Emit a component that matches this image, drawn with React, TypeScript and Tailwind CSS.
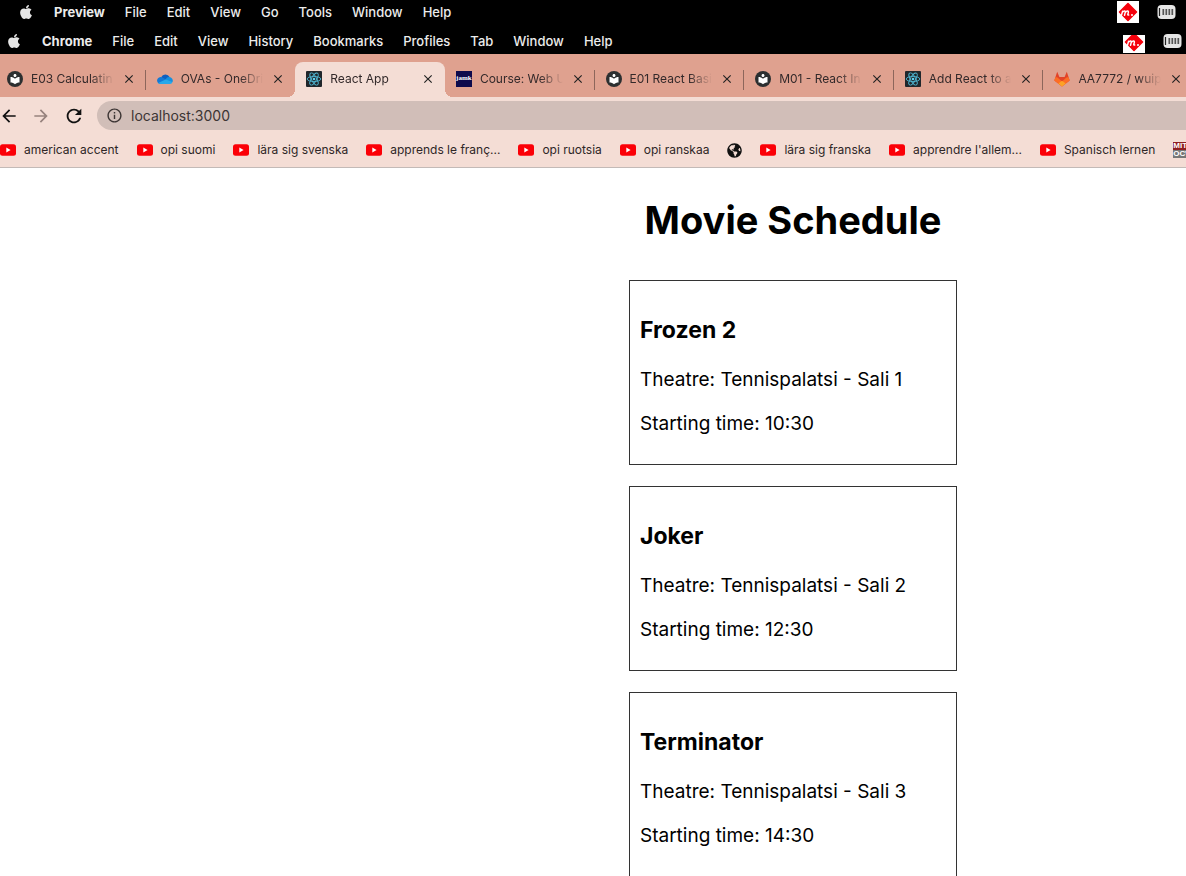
import React from "react";
import { FaApple, FaGlobeAmericas } from "react-icons/fa";
import {
  MdArrowBack,
  MdArrowForward,
  MdClose,
  MdInfoOutline,
  MdLocalLibrary,
  MdRefresh,
} from "react-icons/md";

const previewMenu = ["Preview", "File", "Edit", "View", "Go", "Tools", "Window", "Help"];
const chromeMenu = [
  "Chrome",
  "File",
  "Edit",
  "View",
  "History",
  "Bookmarks",
  "Profiles",
  "Tab",
  "Window",
  "Help",
];

type IconName = "library" | "onedrive" | "react" | "jamk" | "gitlab";

const tabs: { title: string; icon: IconName; active?: boolean }[] = [
  { title: "E03 Calculatin", icon: "library" },
  { title: "OVAs - OneDri", icon: "onedrive" },
  { title: "React App", icon: "react", active: true },
  { title: "Course: Web U", icon: "jamk" },
  { title: "E01 React Basi", icon: "library" },
  { title: "M01 - React In", icon: "library" },
  { title: "Add React to a", icon: "react" },
  { title: "AA7772 / wuip", icon: "gitlab" },
];

const bookmarks: { title: string; icon: "youtube" | "globe" | "mit" }[] = [
  { title: "american accent", icon: "youtube" },
  { title: "opi suomi", icon: "youtube" },
  { title: "lära sig svenska", icon: "youtube" },
  { title: "apprends le franç...", icon: "youtube" },
  { title: "opi ruotsia", icon: "youtube" },
  { title: "opi ranskaa", icon: "youtube" },
  { title: "", icon: "globe" },
  { title: "lära sig franska", icon: "youtube" },
  { title: "apprendre l'allem...", icon: "youtube" },
  { title: "Spanisch lernen", icon: "youtube" },
  { title: "", icon: "mit" },
];

const movies = [
  { title: "Frozen 2", theatre: "Tennispalatsi - Sali 1", time: "10:30" },
  { title: "Joker", theatre: "Tennispalatsi - Sali 2", time: "12:30" },
  { title: "Terminator", theatre: "Tennispalatsi - Sali 3", time: "14:30" },
];

function DiamondIcon({ clipped }: { clipped?: boolean }) {
  return (
    <svg
      viewBox={clipped ? "0 4 22 18" : "0 0 22 22"}
      className={clipped ? "mb-px h-[18px] w-[22px] self-end" : "h-[22px] w-[22px]"}
      aria-hidden="true"
    >
      <rect width="22" height="22" fill="#fff" />
      <path d="M11 2.5 19.5 11 11 19.5 2.5 11Z" fill="#f5000c" stroke="#f5000c" strokeWidth="1.5" strokeLinejoin="round" />
      <path
        d="M4.4 14.4 5.6 10.3M5.4 11.4q1.2-1.5 2.2-1.3 1 .2.6 1.5l-.7 2.6M8.3 11.4q1.3-1.5 2.3-1.3 1.1.2.7 1.5l-.5 1.8q-.2.8.9.7"
        fill="none"
        stroke="#fff"
        strokeWidth="1.5"
        strokeLinecap="round"
      />
      <circle cx="15" cy="13.9" r="1" fill="#fff" />
    </svg>
  );
}

function BatteryIcon() {
  return (
    <svg viewBox="0 0 19 14" className="h-[14px] w-[19px]" aria-hidden="true">
      <rect x="0.5" y="0" width="18" height="14" rx="4" fill="#e6e6e6" />
      <path d="M2.5 3v8" stroke="#222" strokeWidth="1.2" />
      <path d="M6.3 4v6M9.3 4v6M12.3 4v6M15.3 4v6" stroke="#555" strokeWidth="1.7" />
    </svg>
  );
}

function TabIcon({ name }: { name: IconName }) {
  switch (name) {
    case "library":
      return (
        <span className="flex size-4 shrink-0 items-center justify-center rounded-full bg-[#2c2f30] text-white">
          <MdLocalLibrary size={12} />
        </span>
      );
    case "onedrive":
      return (
        <svg viewBox="0 0 16 16" className="size-4 shrink-0" aria-hidden="true">
          <path d="M4.2 6.3A4.6 4.6 0 0 1 12.6 6L9 10.5Z" fill="#0f5fc0" />
          <path d="M3.6 13A3.5 3.5 0 1 1 5 6.3l6 3.4L5 13Z" fill="#1478d4" />
          <path d="M8.6 8.4A3.8 3.8 0 0 1 12.3 6a3.6 3.6 0 0 1 3.2 5L12 11.5Z" fill="#1490df" />
          <path d="m1.2 12 7.4-3.6 6.9 2.7A2.6 2.6 0 0 1 13 13H3.6a3.4 3.4 0 0 1-2.4-1Z" fill="#28a8ea" />
        </svg>
      );
    case "react":
      return (
        <svg viewBox="0 0 16 16" className="size-4 shrink-0" aria-hidden="true">
          <rect width="16" height="16" rx="1" fill="#20262b" />
          <g fill="none" stroke="#4fb4d0" strokeWidth="0.9">
            <ellipse cx="8" cy="8" rx="6.8" ry="2.6" />
            <ellipse cx="8" cy="8" rx="6.8" ry="2.6" transform="rotate(60 8 8)" />
            <ellipse cx="8" cy="8" rx="6.8" ry="2.6" transform="rotate(120 8 8)" />
          </g>
          <circle cx="8" cy="8" r="1.3" fill="#5fd0ee" />
        </svg>
      );
    case "jamk":
      return (
        <span className="flex size-4 shrink-0 items-center justify-center bg-[#0e0a4c] pb-px font-['Liberation_Serif',serif] text-[7px] leading-none font-bold text-white">
          jamk
        </span>
      );
    case "gitlab":
      return (
        <svg viewBox="0 0 16 16" className="size-4 shrink-0" aria-hidden="true">
          <path d="M8 15.5.3 9.6 3.2.8 5.4 6h5.2L12.8.8l2.9 8.8Z" fill="#e24329" />
          <path d="M8 15.5.3 9.6 1.6 6q2 .3 3.4 1.8L8 10.5l3-2.7Q12.4 6.3 14.4 6l1.3 3.6Z" fill="#fc6d26" />
          <path d="m8 15.5-3.7-2.9L8 9.8l3.7 2.8Z" fill="#fca326" />
        </svg>
      );
  }
}

function BookmarkIcon({ name }: { name: "youtube" | "globe" | "mit" }) {
  if (name === "globe") return <FaGlobeAmericas size={15} className="shrink-0 text-[#111]" aria-hidden="true" />;
  if (name === "mit")
    return (
      <span className="flex shrink-0 flex-col font-['Liberation_Sans',sans-serif] text-[8px] leading-none font-bold text-white">
        <span className="bg-[#8f1d22]">MIT</span>
        <span className="bg-[#777]">OCW</span>
      </span>
    );
  return (
    <svg viewBox="0 0 16 12" className="h-3 w-4 shrink-0" aria-hidden="true">
      <rect y="0.3" width="16" height="11.4" rx="2.5" fill="#fb0007" />
      <path d="M6.3 3.6v4.8L10.6 6Z" fill="#fff" />
    </svg>
  );
}

function MenuBar({ items, className, clipped }: { items: string[]; className: string; clipped?: boolean }) {
  return (
    <nav className={`flex items-center justify-between text-[13px] leading-4 font-medium text-[#ececec] ${className}`}>
      <div className="flex items-center gap-5">
        <button aria-label="Apple menu" className="text-[#e6e6e6]">
          <FaApple size={16} />
        </button>
        {items.map((item, i) => (
          <button key={item} className={i === 0 ? "font-bold" : ""}>
            {item}
          </button>
        ))}
      </div>
      <div className="flex items-center gap-[18px] self-stretch">
        <DiamondIcon clipped={clipped} />
        <BatteryIcon />
      </div>
    </nav>
  );
}

function BrowserTab({ title, icon, active, divider }: { title: string; icon: IconName; active?: boolean; divider: boolean }) {
  return (
    <div
      role="tab"
      aria-selected={!!active}
      className={`relative flex min-w-0 flex-1 items-center gap-2 pr-[10px] pb-px pl-[11px] text-[12px] text-[#33292a] ${
        active ? "rounded-t-lg bg-[#f4ddd5]" : ""
      }`}
    >
      {active && (
        <>
          <span className="absolute bottom-0 -left-2 size-2 bg-[radial-gradient(circle_at_0_0,transparent_8px,#f4ddd5_8px)]" />
          <span className="absolute -right-2 bottom-0 size-2 bg-[radial-gradient(circle_at_100%_0,transparent_8px,#f4ddd5_8px)]" />
        </>
      )}
      <TabIcon name={icon} />
      <span className="min-w-0 flex-1 [mask-image:linear-gradient(to_right,#000_72%,transparent)] whitespace-nowrap">
        {title}
      </span>
      <button aria-label={`Close ${title}`} className="shrink-0 text-[#222]">
        <MdClose size={14} />
      </button>
      {divider && <span className="absolute top-2 right-0 h-5 w-px bg-[#8d665b]" />}
    </div>
  );
}

export default function App() {
  return (
    <div className="h-screen overflow-hidden bg-white font-[Inter,'Noto_Sans',sans-serif] text-black">
      <header>
        <div className="bg-black">
          <MenuBar items={previewMenu} className="h-6 pr-[10px] pl-[18px]" />
          <MenuBar items={chromeMenu} className="h-[30px] pt-1 pr-1 pl-[6px]" clipped />
        </div>
        <div className="overflow-hidden bg-[#dfa18f] pt-2">
          <div role="tablist" className="-mr-[7px] -ml-1 flex h-[35px]">
            {tabs.map((tab, i) => (
              <BrowserTab key={tab.title} {...tab} divider={i !== 1 && i !== 2 && i !== 7} />
            ))}
          </div>
        </div>
        <div className="flex items-center bg-[#f4ddd5] pt-1">
          <button aria-label="Back" className="-ml-px text-[#111]">
            <MdArrowBack size={20} />
          </button>
          <button aria-label="Forward" className="ml-3 text-[#96827d]">
            <MdArrowForward size={20} />
          </button>
          <button aria-label="Reload" className="ml-3 text-[#111]">
            <MdRefresh size={22} />
          </button>
          <div className="-mr-5 ml-3 flex h-[29px] flex-1 items-center gap-2 rounded-l-full bg-[#d1beb8] pl-[9px] text-[#3c3534]">
            <MdInfoOutline size={17} />
            <input
              aria-label="Address"
              defaultValue="localhost:3000"
              className="min-w-0 flex-1 bg-transparent text-[14px] outline-none"
            />
          </div>
        </div>
        <div className="flex h-[38px] items-center gap-[18px] overflow-hidden border-b border-[#c3bab7] bg-[#f4ddd5] pt-[3px] text-[12px] text-[#2e2626]">
          {bookmarks.map((b, i) => (
            <a key={i} href="#" aria-label={b.title || b.icon} className="flex shrink-0 items-center gap-2 whitespace-nowrap">
              <BookmarkIcon name={b.icon} />
              {b.title && <span>{b.title}</span>}
            </a>
          ))}
        </div>
      </header>
      <main className="flex flex-col items-center pt-7 pl-[400px]">
        <h1 className="text-[38px] leading-[48px] font-bold">Movie Schedule</h1>
        <div className="mt-9 flex w-[328px] flex-col gap-[21px]">
          {movies.map((m) => (
            <article key={m.title} className="border border-[#333] px-[10px] pt-[35px] pb-[28px]">
              <h3 className="text-[23px] leading-7 font-bold">{m.title}</h3>
              <p className="mt-6 text-[19px] leading-6">Theatre: {m.theatre}</p>
              <p className="mt-5 text-[19px] leading-6">Starting time: {m.time}</p>
            </article>
          ))}
        </div>
      </main>
    </div>
  );
}
